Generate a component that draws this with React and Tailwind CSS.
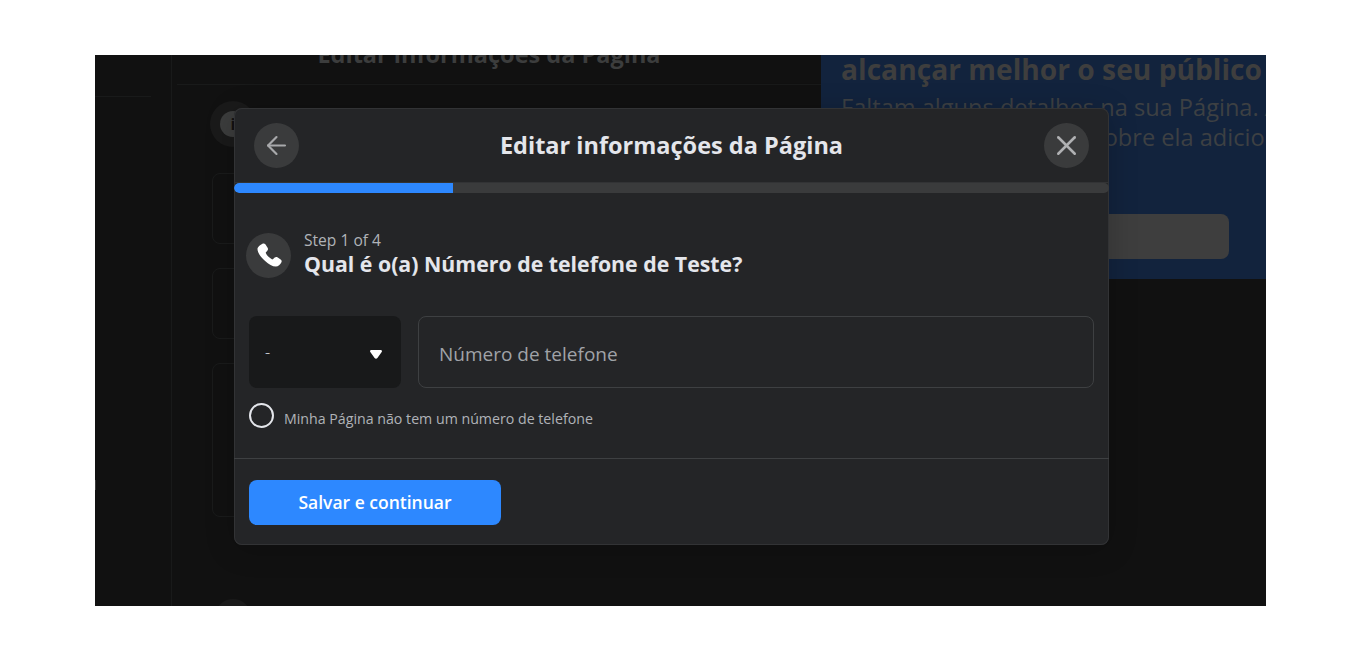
import { ArrowLeft, X } from "lucide-react";

const font = { fontFamily: '"Open Sans", "Noto Sans", sans-serif' };

function Backdrop() {
  return (
    <div className="flex h-full text-[#3e3e3e]">
      <div className="w-[77px] shrink-0 border-r border-[#191a1a]">
        <div className="mt-[41px] w-[56px] border-t border-[#191a1a]" />
        <div className="mt-[383px] w-[1px] h-[10px] bg-[#3a3a3a]" />
      </div>
      <div className="w-[649px] shrink-0">
        <div className="h-[31px] -mt-[1px] border-b border-[#191a1a] ml-[5px] pr-[20px] text-center overflow-hidden">
          <div className="text-[23.5px] font-bold leading-[28px] -mt-[14px] text-[#3c3d3d]">Editar informações da Página</div>
        </div>
        <div className="ml-[38px] mt-[16px] w-[46px] h-[46px] rounded-full bg-[#1a1a1a] grid place-items-center">
          <div className="w-[26px] h-[26px] rounded-full bg-[#3c3d3d] grid place-items-center text-[#111111] text-[16px] font-bold leading-none">i</div>
        </div>
        <div className="ml-[40px] mt-[26px] flex flex-col gap-[24px]">
          <div className="h-[71px] rounded-lg border border-[#1a1b1b]" />
          <div className="h-[71px] rounded-lg border border-[#1a1b1b]" />
          <div className="h-[154px] rounded-lg border border-[#1a1b1b]" />
        </div>
        <div className="ml-[43px] mt-[82px] w-[36px] h-[36px] rounded-full bg-[#1a1a1a]" />
      </div>
      <div className="flex-1 min-w-0 h-[224px] bg-[#12233d] pl-[20px] overflow-hidden whitespace-nowrap">
        <div className="text-[28.2px] font-bold leading-[30px] -mt-[1px]">alcançar melhor o seu público</div>
        <div className="text-[23.6px] leading-[30px] mt-[8px] text-[#3d4043]">Faltam alguns detalhes na sua Página. Ajude</div>
        <div className="text-[23.6px] leading-[30px] text-[#3d4043]">às pessoas saber mais sobre ela adicionando</div>
        <div className="mt-[62px] h-[45px] w-[388px] rounded-lg bg-[#3e3e3e]" />
      </div>
    </div>
  );
}

function PhoneIcon() {
  return (
    <svg width="27" height="27" viewBox="0 0 24 24" fill="#fff">
      <path d="M6.600 1.600c.9-.6 2-.4 2.600.5l2 3c.5.8.5 1.700-.1 2.400L9.800 9c-.3.3-.3.7-.1 1.100.6 1.200 1.400 2.200 2.300 3.100.9.9 1.900 1.600 3 2.200.4.2.8.1 1.100-.2l1.400-1.400c.7-.6 1.700-.7 2.400-.2l2.900 1.900c.9.6 1.200 1.800.6 2.700-1 1.700-2.600 3.600-4.900 3.600-2.900 0-6.400-2-9.500-5C5.100 13.800 2.200 9.500 2.200 6.300c0-2 2.700-3.700 4.400-4.700z" />
    </svg>
  );
}

function RoundIcon({ children }) {
  return <div className="w-[45px] h-[45px] rounded-full bg-[#3a3b3c] grid place-items-center shrink-0">{children}</div>;
}

function Modal() {
  return (
    <div className="absolute left-[139px] top-[53px] w-[875px] h-[437px] rounded-lg bg-[#242527] shadow-[inset_0_0_0_1px_#323335,0_4px_30px_rgba(0,0,0,0.2)] overflow-hidden flex flex-col">
      <header className="h-[75px] shrink-0 border-b border-[#323335] flex items-center justify-between px-[20px]">
        <RoundIcon><ArrowLeft size={29} strokeWidth={1.8} className="text-[#a8a9ab]" /></RoundIcon>
        <h1 className="text-[23.5px] font-bold text-[#e4e6eb] leading-[30px] -mt-[1px]">Editar informações da Página</h1>
        <RoundIcon><X size={33} strokeWidth={1.8} className="text-[#b0b1b3]" /></RoundIcon>
      </header>
      <div className="h-[10px] shrink-0 bg-[#3a3b3c] rounded-full overflow-hidden">
        <div className="h-full w-[25%] bg-[#2d88ff] rounded-l-full" />
      </div>
      <section className="flex-1 px-[15px]">
        <div className="flex items-center gap-[13px] mt-[40px] -ml-[3px]">
          <RoundIcon><PhoneIcon /></RoundIcon>
          <div className="-mt-[5px]">
            <div className="text-[15.6px] leading-[18px] text-[#b0b3b8]">Step 1 of 4</div>
            <div className="text-[21.3px] font-bold leading-[25px] mt-[2px] text-[#e4e6eb]">Qual é o(a) Número de telefone de Teste?</div>
          </div>
        </div>
        <div className="flex gap-[17px] mt-[38px]">
          <div className="w-[152px] h-[72px] rounded-lg bg-[#18191a] flex items-center justify-between pl-[16px] pr-[19px] text-[#e4e6eb]">
            <span className="text-[16px] font-light leading-none">-</span>
            <svg width="12" height="9" viewBox="0 0 12 9" fill="#fff" className="mt-[4px]"><path d="M1.500 0h9c1.200 0 1.800 1 1.200 2L7.400 7.900c-.7 1-2.100 1-2.800 0L.3 2C-.3 1 .3 0 1.500 0z" /></svg>
          </div>
          <div className="flex-1 h-[72px] rounded-lg border border-[#3e4042] flex items-center pl-[20px] pt-[4px] text-[19px] text-[#a0a3a8]">Número de telefone</div>
        </div>
        <label className="flex items-center gap-[10px] mt-[15px]">
          <span className="w-[25px] h-[25px] rounded-full border-2 border-[#e4e6eb] shrink-0" />
          <span className="text-[14.2px] leading-[18px] text-[#b0b3b8] mt-[6px]">Minha Página não tem um número de telefone</span>
        </label>
      </section>
      <footer className="h-[87px] shrink-0 border-t border-[#3e4042] px-[15px] pt-[21px]">
        <button className="w-[252px] h-[45px] rounded-lg bg-[#2d88ff] text-white text-[17.5px] font-semibold">Salvar e continuar</button>
      </footer>
    </div>
  );
}

export default function App() {
  return (
    <div className="h-[665px] bg-white pt-[55px] pl-[95px] overflow-hidden" style={font}>
      <div className="relative w-[1171px] h-[551px] bg-[#111111] overflow-hidden">
        <Backdrop />
        <Modal />
      </div>
    </div>
  );
}
